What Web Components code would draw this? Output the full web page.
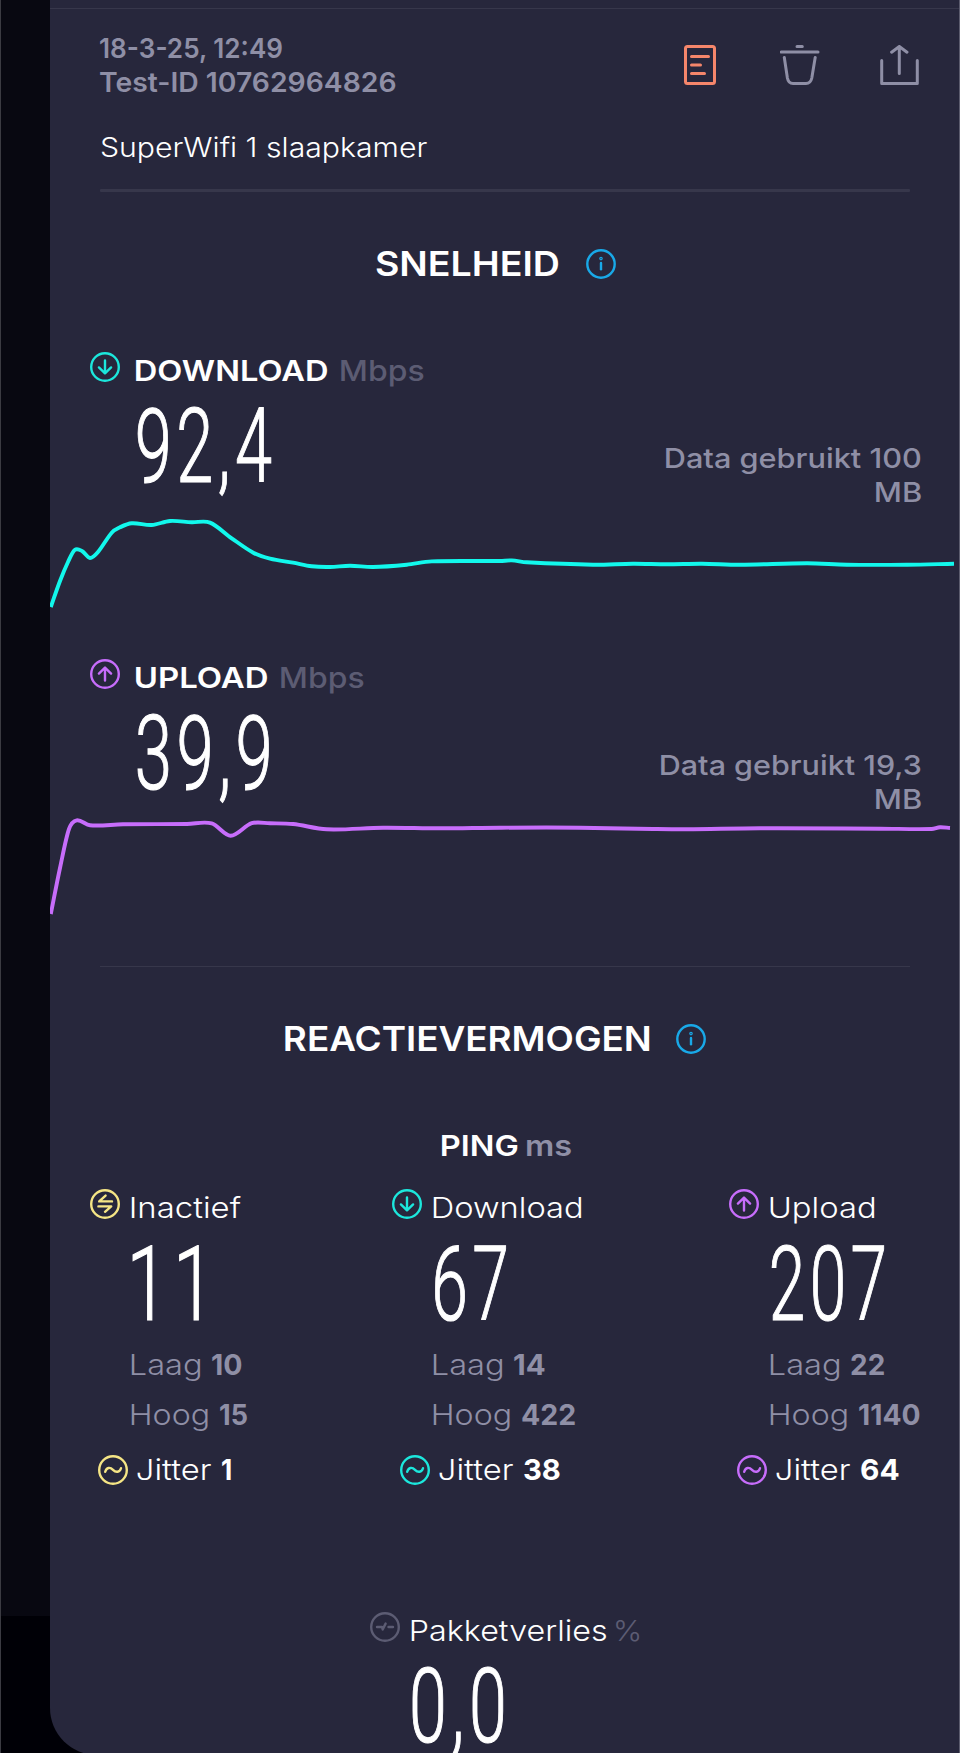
<!DOCTYPE html>
<html lang="nl">
<head>
<meta charset="utf-8">
<title>Testresultaat</title>
<style>
  html, body { margin: 0; height: 1753px; overflow: hidden; background: #000; }
  body { font-family: "Inter", "Open Sans", sans-serif; color: #fff; }
</style>
</head>
<body>
<result-page>
  <result-header date="18-3-25, 12:49" test="Test-ID 10762964826" note="SuperWifi 1 slaapkamer"></result-header>
  <section-title w="183">SNELHEID</section-title>
  <speed-result icon="down" color="#1ce7dc" line="#12f8ec" label="DOWNLOAD" label-w="191.5" value="92,4" value-w="133" data="Data gebruikt 100" data-w="255"
    points="0.8,98 10,72 18,53 24.7,41 32,42 40,49 48,43 61.7,23.7 70,18.3 81.7,14.3 101.7,16 120,12 141.7,13.3 160,13.6 181.7,29.3 203.3,43.7 220,49.7 243,53.7 261.7,57.3 280,58 300,56.7 323,58 356.7,55.7 381.7,52.4 450,52 461.7,51.4 476.7,53.3 543,55.7 583,54.7 617,55.2 652,54.7 690,55.7 757,54.3 797,55.7 857,55.7 904,54.7"></speed-result>
  <speed-result icon="up" color="#c76dfb" line="#c76dfb" label="UPLOAD" label-w="131.5" value="39,9" value-w="131" data="Data gebruikt 19,3" data-w="259.5"
    points="0.8,98 10,52 19,13 26.7,4.3 40,9.3 73,8.3 137,8 161.7,7.4 180.7,19.7 201.7,7.2 220,7.3 243,8 276.7,13.3 333,11.7 390,12.3 450,11.7 530,11.7 603,13 637,13.3 710,12.3 830,12.7 881.7,13 890,11.2 900,12"></speed-result>
  <thin-rule></thin-rule>
  <section-title w="364.5">REACTIEVERMOGEN</section-title>
  <ping-results></ping-results>
  <packet-loss></packet-loss>
</result-page>

<script>
const ICONS = {
  info: '<circle cx="15" cy="15" r="13.7"/><path d="M15 14V20.3"/><circle cx="15" cy="9.6" r=".6"/>',
  down: '<circle cx="15" cy="15" r="13.8"/><path d="M15 8.4V21.3M8.9 15.4L15 21.4L21.1 15.4"/>',
  up: '<circle cx="15" cy="15" r="13.8"/><path d="M15 21.6V8.7M8.9 14.6L15 8.6L21.1 14.6"/>',
  idle: '<circle cx="15" cy="15" r="13.8"/><path d="M22 12.4H9.2L15.6 6.6M8.4 17.4H21.2L15 22.8"/>',
  jitter: '<circle cx="15" cy="15" r="13.8"/><path d="M7.2 16.8C8.4 12 12.3 12 15 14.8S21.8 17.6 23 13.2"/>',
  loss: '<circle cx="15" cy="15" r="13.8"/><path d="M7 15H12L12.7 17.4L15.6 11.6M18.5 15H23"/>',
  note: '<rect x="5.5" y="1.5" width="29" height="37" rx="2"/><path d="M11.5 11.5H28.5M11.5 20H20.5M11.5 28.4H24.5"/>',
  trash: '<path d="M17 1.5H22.3M1.3 7H38M4.3 12.5L7.4 33Q8.4 38.5 13 38.5H26Q30.6 38.5 31.8 33L35.2 12.5"/>',
  share: '<path d="M1.7 15.5V38.5H37.3V15.5M19.3 28.5V1.8M11.6 7.2L19.3 1.5L27 7.2"/>'
};

class AppIcon extends HTMLElement {
  connectedCallback() {
    const size = this.getAttribute("size") || 30;
    this.attachShadow({ mode: "open" }).innerHTML = `<style>
      :host { display: block; flex: none; width: ${size}px; height: ${size}px; }
      svg { display: block; fill: none; stroke: currentColor; stroke-width: ${size > 30 ? 3 : 2.4}; stroke-linecap: round; stroke-linejoin: round; }
    </style>
    <svg width="${size}" height="${size}">${ICONS[this.getAttribute("name")]}</svg>`;
  }
}

// One line of text, stretched so that its ink is exactly "w" pixels wide
class FitText extends HTMLElement {
  connectedCallback() {
    const w = Number(this.getAttribute("w"));
    const root = this.attachShadow({ mode: "open" });
    const style = getComputedStyle(this);
    const ctx = document.createElement("canvas").getContext("2d");
    ctx.font = `${style.fontWeight} ${style.fontSize} ${style.fontFamily}`;
    const m = ctx.measureText(this.textContent);
    // letter-spacing counts between the glyphs only, not after the last one
    const spacing = (parseFloat(style.letterSpacing) || 0) * (this.textContent.length - 1);
    const scale = w / (m.actualBoundingBoxRight + m.actualBoundingBoxLeft + spacing);
    root.innerHTML = `<style>
      :host { display: block; flex: none; width: ${w}px; white-space: pre; }
      span { display: inline-block; transform-origin: 0 0; transform: translateX(${m.actualBoundingBoxLeft * scale}px) scaleX(${scale}); }
    </style><span><slot></slot></span>`;
  }
}

class ResultPage extends HTMLElement {
  connectedCallback() {
    this.attachShadow({ mode: "open" }).innerHTML = `<style>
      :host { display: flex; box-sizing: border-box; width: 960px; height: 1753px; overflow: hidden; border-left: 1px solid #3b3b42; background: linear-gradient(#080811 1616px, #000006 1616px); }
      main { box-sizing: border-box; width: 909px; height: 1755px; margin-left: 49px; padding-top: 8px; background: #27273c; border-bottom-left-radius: 47px; }
      .top { height: 1px; background: #37374b; }
      .edge { width: 1px; background: #5c5c6e; }
    </style>
    <main><div class="top"></div><slot></slot></main><div class="edge"></div>`;
  }
}

class ResultHeader extends HTMLElement {
  connectedCallback() {
    const get = (name) => this.getAttribute(name);
    this.attachShadow({ mode: "open" }).innerHTML = `<style>
      :host { display: block; padding: 22px 0 0 50px; font-size: 27.5px; line-height: 34px; }
      .row { display: flex; justify-content: space-between; color: #8f8fa6; font-weight: 600; }
      .actions { display: flex; gap: 60px; padding: 14px 39px 0 0; }
      .note { margin-top: 31px; padding-left: .5px; font-weight: 350; }
      .rule { width: 810px; height: 3px; margin-top: 25px; background: #37374b; border-radius: 1px; }
    </style>
    <div class="row">
      <div><fit-text w="183">${get("date")}</fit-text><fit-text w="296">${get("test")}</fit-text></div>
      <div class="actions">
        <app-icon name="note" size="40" style="color:#f5866b"></app-icon>
        <app-icon name="trash" size="40"></app-icon>
        <app-icon name="share" size="40"></app-icon>
      </div>
    </div>
    <div class="note"><fit-text w="326.5">${get("note")}</fit-text></div>
    <div class="rule"></div>`;
  }
}

class SectionTitle extends HTMLElement {
  connectedCallback() {
    this.attachShadow({ mode: "open" }).innerHTML = `<style>
      :host { display: flex; width: 891px; margin-top: 52px; justify-content: center; align-items: center; gap: 27px; font-size: 34.4px; font-weight: 600; line-height: 40px; }
      app-icon { color: #19a9e8; }
    </style>
    <fit-text w="${this.getAttribute("w")}">${this.textContent}</fit-text><app-icon name="info"></app-icon>`;
  }
}

class ThinRule extends HTMLElement {
  connectedCallback() {
    this.attachShadow({ mode: "open" }).innerHTML = `<style>
      :host { display: block; width: 810px; height: 1px; margin: 40px 0 0 50px; background: #37374b; }
    </style>`;
  }
}

class BigNumber extends HTMLElement {
  connectedCallback() {
    this.attachShadow({ mode: "open" }).innerHTML = `<style>
      :host { display: block; height: 90px; font: 300 104px/90px Roboto, sans-serif; letter-spacing: 7px; -webkit-text-stroke: 1.2px #fff; }
    </style>
    <fit-text w="${this.getAttribute("w")}">${this.textContent}</fit-text>`;
  }
}

class SpeedChart extends HTMLElement {
  connectedCallback() {
    const p = this.getAttribute("points").trim().split(/\s+/).map((s) => s.split(",").map(Number));
    let d = `M${p[0]}`;
    for (let i = 0; i < p.length - 1; i++) {
      const a = p[i - 1] || p[i], b = p[i], c = p[i + 1], e = p[i + 2] || c;
      // handles stay inside the segment, whatever the spacing of the samples
      const h = (c[0] - b[0]) / 3;
      const s1 = (c[1] - a[1]) / (c[0] - a[0]);
      const s2 = (e[1] - b[1]) / (e[0] - b[0]);
      d += `C${b[0] + h},${b[1] + s1 * h} ${c[0] - h},${c[1] - s2 * h} ${c}`;
    }
    this.attachShadow({ mode: "open" }).innerHTML = `<style>
      :host { display: block; height: 110px; }
      svg { display: block; }
    </style>
    <svg width="909" height="110"><path d="${d}" fill="none" stroke="${this.getAttribute("color")}" stroke-width="3.9"/></svg>`;
  }
}

class SpeedResult extends HTMLElement {
  connectedCallback() {
    const get = (name) => this.getAttribute(name);
    this.attachShadow({ mode: "open" }).innerHTML = `<style>
      :host { display: block; margin-top: 67px; }
      :host(:nth-of-type(2)) { margin-top: 39px; }
      .head { display: flex; padding-left: 40px; font-size: 29px; font-weight: 600; line-height: 40px; }
      .head app-icon { margin: 1px 15.5px 0 0; }
      .unit { color: #5c5c73; margin-left: 13.5px; font-weight: 500; }
      .body { display: flex; justify-content: space-between; box-sizing: border-box; height: 118px; padding: 11px 38.5px 0 88px; }
      .data { display: flex; flex-direction: column; align-items: flex-end; padding-top: 39px; color: #8f8fa6; font-size: 27.5px; font-weight: 550; line-height: 34px; }
    </style>
    <div class="head">
      <app-icon name="${get("icon")}" style="color:${get("color")}"></app-icon>
      <fit-text w="${get("label-w")}">${get("label")}</fit-text>
      <fit-text class="unit" w="83">Mbps</fit-text>
    </div>
    <div class="body">
      <big-number w="${get("value-w")}">${get("value")}</big-number>
      <div class="data"><fit-text w="${get("data-w")}">${get("data")}</fit-text><fit-text w="45">MB</fit-text></div>
    </div>
    <speed-chart color="${get("line")}" points="${get("points")}"></speed-chart>`;
  }
}

const PINGS = [
  { icon: "idle", color: "#f5e585", label: ["Inactief", 110], value: ["11", 66], low: ["10", 30], high: ["15", 27.5], jitter: ["1", 9] },
  { icon: "down", color: "#1ce7dc", label: ["Download", 149], value: ["67", 71], low: ["14", 31], high: ["422", 53], jitter: ["38", 36] },
  { icon: "up", color: "#c76dfb", label: ["Upload", 105], value: ["207", 112], low: ["22", 33], high: ["1140", 61], jitter: ["64", 38] }
];

class PingResults extends HTMLElement {
  connectedCallback() {
    const fit = ([text, w], cls = "") => `<fit-text class="${cls}" w="${w}">${text}</fit-text>`;
    const column = (p) => `<div>
      <div class="row label"><app-icon name="${p.icon}" style="color:${p.color}"></app-icon>${fit(p.label)}</div>
      <big-number w="${p.value[1]}">${p.value[0]}</big-number>
      <div class="row low">${fit(["Laag", 70])}${fit(p.low, "b")}</div>
      <div class="row high">${fit(["Hoog", 77.5])}${fit(p.high, "b")}</div>
      <div class="row jitter"><app-icon name="jitter" style="color:${p.color}"></app-icon>${fit(["Jitter", 74])}${fit(p.jitter, "b")}</div>
    </div>`;
    this.attachShadow({ mode: "open" }).innerHTML = `<style>
      :host { display: block; margin-top: 66.5px; font-size: 29px; font-weight: 350; line-height: 40px; }
      .title { display: flex; gap: 8px; padding-left: 392px; font-weight: 600; }
      .title .unit { color: #8f8fa6; }
      .columns { display: grid; grid-template-columns: 302px 337px auto; padding: 22px 0 0 40px; }
      .row { display: flex; height: 40px; }
      .label { gap: 11px; }
      .label app-icon { margin-top: 1px; }
      big-number { margin: 12px 0 0 43px; }
      .low, .high { gap: 11px; padding-left: 41px; color: #8f8fa6; font-weight: 300; }
      .low { margin-top: 15px; }
      .high { margin-top: 10px; }
      .jitter { margin-top: 15px; gap: 9px; padding-left: 8px; align-items: center; }
      .b { font-weight: 700; }
      .jitter .b { margin-left: 2px; }
    </style>
    <div class="title">${fit(["PING", 76])}${fit(["ms", 45], "unit")}</div>
    <div class="columns">${PINGS.map(column).join("")}</div>`;
  }
}

class PacketLoss extends HTMLElement {
  connectedCallback() {
    this.attachShadow({ mode: "open" }).innerHTML = `<style>
      :host { display: block; margin-top: 121px; padding-left: 320px; font-size: 29px; font-weight: 350; line-height: 40px; }
      .row { display: flex; }
      app-icon { margin: 1.5px 10.5px 0 0; color: #5c5c73; }
      .unit { margin-left: 10px; color: #5c5c73; }
      big-number { margin: 11px 0 0 43px; }
    </style>
    <div class="row"><app-icon name="loss"></app-icon><fit-text w="195.5">Pakketverlies</fit-text><fit-text class="unit" w="24">%</fit-text></div>
    <big-number w="90">0,0</big-number>`;
  }
}

customElements.define("app-icon", AppIcon);
customElements.define("fit-text", FitText);
customElements.define("big-number", BigNumber);
customElements.define("speed-chart", SpeedChart);
customElements.define("thin-rule", ThinRule);
customElements.define("section-title", SectionTitle);
customElements.define("result-header", ResultHeader);
customElements.define("speed-result", SpeedResult);
customElements.define("ping-results", PingResults);
customElements.define("packet-loss", PacketLoss);
customElements.define("result-page", ResultPage);
</script>
</body>
</html>
